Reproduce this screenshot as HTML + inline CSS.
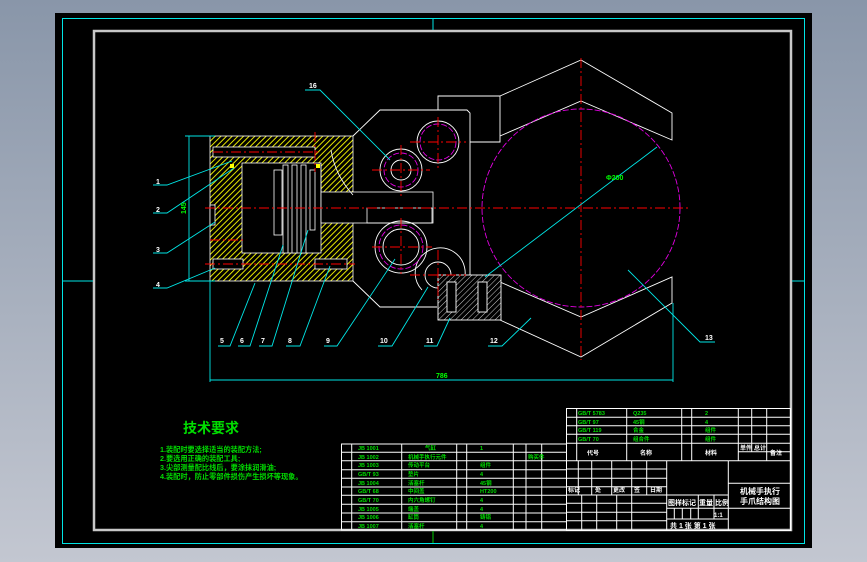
<!DOCTYPE html>
<html><head><meta charset="utf-8"><style>
html,body{margin:0;padding:0;width:867px;height:562px;overflow:hidden;background:linear-gradient(#8996a9,#c3c7d1);}
svg{position:absolute;left:0;top:0}
text{font-family:"Liberation Sans","Noto Sans CJK SC",sans-serif;font-weight:bold}
</style></head><body>
<svg width="867" height="562" viewBox="0 0 867 562" xmlns="http://www.w3.org/2000/svg">
<defs>
<pattern id="hy" width="4" height="4" patternUnits="userSpaceOnUse" patternTransform="rotate(45)">
<rect width="4" height="4" fill="#000"/><line x1="0" y1="0" x2="0" y2="4" stroke="#e6e600" stroke-width="2"/></pattern>
<pattern id="hw" width="4" height="4" patternUnits="userSpaceOnUse" patternTransform="rotate(45)">
<rect width="4" height="4" fill="#000"/><line x1="0" y1="0" x2="0" y2="4" stroke="#fff" stroke-width="0.8"/></pattern>
</defs>
<rect x="55" y="13" width="757" height="535" fill="#000"/>
<rect x="62.5" y="18.5" width="742" height="525" fill="none" stroke="#00e5e5" stroke-width="1"/>
<rect x="94" y="31" width="697" height="499" fill="none" stroke="#c8c8c8" stroke-width="2.5"/>
<g stroke="#00e5e5" stroke-width="1">
<line x1="433" y1="18" x2="433" y2="30"/><line x1="62" y1="281" x2="93" y2="281"/><line x1="792" y1="281" x2="804" y2="281"/></g>
<line x1="433" y1="531" x2="433" y2="543" stroke="#0c0" stroke-width="1"/>

<!-- cylinder -->
<g stroke="#fff" stroke-width="0.8">
<rect x="210" y="136" width="143" height="145" fill="url(#hy)"/>
<rect x="242" y="163" width="79" height="90" fill="#000"/>
<rect x="321" y="192" width="112" height="31" fill="#000"/>
<path d="M321 163 V192 M331 150 Q335 175 353 195" fill="none"/>
<rect x="213" y="147" width="102" height="10" fill="#000"/>
<rect x="213" y="259" width="30" height="10" fill="#000"/>
<rect x="315" y="259" width="32" height="10" fill="#000"/>
<rect x="210" y="205" width="5" height="20" fill="#000"/>
<rect x="274" y="170" width="8" height="65" fill="#000"/>
<rect x="283" y="165" width="5" height="88" fill="#000"/>
<rect x="292" y="165" width="5" height="88" fill="#000"/>
<rect x="301" y="165" width="5" height="88" fill="#000"/>
<rect x="310" y="170" width="5" height="60" fill="#000"/>
<rect x="367" y="208" width="65" height="15" fill="none"/>
</g>
<rect x="230" y="164" width="4" height="4" fill="#ff0"/><rect x="316" y="164" width="4" height="4" fill="#ff0"/>

<!-- plate -->
<g stroke="#fff" stroke-width="0.9" fill="none">
<path d="M353 136 L380 110 H467 L470 113 V275"/>
<path d="M353 281 L380 307 H437"/>
<path d="M470 142 H500 V96 H438 V110"/>
<path d="M500 96 L581 60 L672 113 V140 L581 101 L500 136"/>
<path d="M500 282 L581 317 L672 277 V303 L581 357 L500 320"/>
<circle cx="401" cy="170" r="21"/><circle cx="401" cy="170" r="10"/>
<circle cx="438" cy="142" r="21"/>
<circle cx="401" cy="247" r="26"/><circle cx="401" cy="247" r="18"/>
<path d="M422 290 A25 25 0 1 1 462 285"/><circle cx="438" cy="275" r="13"/>
<rect x="438" y="275" width="63" height="45" fill="url(#hw)"/>
<rect x="447" y="282" width="9" height="30" fill="#000"/><rect x="478" y="282" width="9" height="30" fill="#000"/>
</g>
<g stroke="#e000e0" stroke-width="0.9" fill="none" stroke-dasharray="6,2">
<circle cx="581" cy="208" r="99"/><circle cx="401" cy="170" r="17"/><circle cx="438" cy="142" r="18"/><circle cx="401" cy="247" r="22"/></g>

<!-- center lines -->
<g stroke="#f00" stroke-width="0.9" stroke-dasharray="10,3,2,3">
<line x1="205" y1="208" x2="690" y2="208"/><line x1="581" y1="58" x2="581" y2="360"/>
<line x1="213" y1="152" x2="318" y2="152"/><line x1="205" y1="264" x2="355" y2="264"/><line x1="210" y1="240" x2="245" y2="240"/>
<line x1="372" y1="170" x2="430" y2="170"/><line x1="401" y1="145" x2="401" y2="198"/>
<line x1="410" y1="142" x2="466" y2="142"/><line x1="438" y1="117" x2="438" y2="168"/>
<line x1="372" y1="247" x2="432" y2="247"/><line x1="401" y1="218" x2="401" y2="274"/>
<line x1="410" y1="275" x2="466" y2="275"/><line x1="438" y1="250" x2="438" y2="300"/>
<line x1="315" y1="132" x2="315" y2="172"/></g>

<!-- dims and leaders -->
<g stroke="#00e5e5" stroke-width="0.9" fill="none">
<path d="M210 281 V382 M673 303 V382 M210 380 H673 M185 136 H215 M185 281 H215 M189 136 V281"/>
<path d="M153 185 H167 L232 161 M153 213 H167 L234 168 M153 253 H167 L215 222 M153 288 H167 L215 268"/>
<path d="M218 346 H230 L255 283 M238 346 H250 L283 245 M259 346 H272 L308 230 M286 346 H300 L330 266 M324 346 H337 L395 259 M378 346 H392 L428 287 M424 346 H437 L450 318 M488 346 H502 L531 318"/>
<path d="M305 90 H320 L390 160 M485 277 L657 147 M628 270 L700 342 H715"/></g>
<g fill="#fff" font-size="7">
<text x="156" y="184">1</text><text x="156" y="212">2</text><text x="156" y="252">3</text><text x="156" y="287">4</text>
<text x="220" y="343">5</text><text x="240" y="343">6</text><text x="261" y="343">7</text><text x="288" y="343">8</text><text x="326" y="343">9</text><text x="380" y="343">10</text><text x="426" y="343">11</text><text x="490" y="343">12</text><text x="705" y="340">13</text><text x="309" y="88">16</text></g>
<g fill="#0f0" font-size="7"><text x="436" y="378">786</text><text x="182" y="210" transform="rotate(-90 186 210)">145</text><text x="606" y="180">Φ200</text></g>

<!-- tech requirements -->
<g fill="#0d0">
<text x="183" y="433" font-size="14">技术要求</text>
<text x="160" y="452" font-size="7.2">1.装配时要选择适当的装配方法;</text>
<text x="160" y="461" font-size="7.2">2.要选用正确的装配工具;</text>
<text x="160" y="470" font-size="7.2">3.尖部测量配比线后，要涂抹润滑油;</text>
<text x="160" y="479" font-size="7.2">4.装配时，防止零部件损伤产生损坏等现象。</text></g>

<!-- tables -->
<g stroke="#fff" stroke-width="1" fill="none">
<rect x="566.5" y="408.5" width="224" height="122"/>
<path d="M566 417.3 H790 M566 425.7 H790 M566 434.3 H790 M566 443.3 H790 M738 451.7 H790 M566 460.7 H790"/>
<path d="M576.7 408 V460.7 M626.7 408 V460.7 M681.7 408 V460.7 M691.7 408 V460.7 M738.3 408 V460.7 M751.7 408 V451.7 M766.7 408 V460.7"/>
<rect x="341.5" y="444" width="225" height="86"/>
<path d="M341 452.3 H566 M341 460.7 H566 M341 469.7 H566 M341 478.3 H566 M341 487 H566 M341 495.3 H566 M341 504.3 H566 M341 513 H566 M341 521.7 H566"/>
<path d="M351.7 444 V530 M401.7 444 V530 M456.7 444 V530 M466.7 444 V530 M513.3 444 V530 M526 444 V530 M541.7 444 V530"/>
<path d="M666.7 460.7 V530 M728.3 460.7 V530"/>
<path d="M566 469 H666.7 M566 478.3 H666.7 M566 486.7 H666.7 M566 495 H666.7 M566 503.3 H666.7 M566 512.3 H666.7 M566 520.7 H666.7"/>
<path d="M578.3 460.7 V495 M591.7 460.7 V495 M611.7 460.7 V495 M631.7 460.7 V530 M646.7 460.7 V495 M581.7 495 V530 M596.7 495 V530 M616.7 495 V530"/>
<path d="M666.7 495 H728 M666.7 508.3 H790 M666.7 519 H728 M728 483.3 H790"/>
<path d="M674.3 508.3 V519 M682.3 508.3 V519 M690.7 508.3 V519 M698.3 495 V519 M714 495 V519"/></g>
<g fill="#0d0" font-size="5.5">
<text x="578" y="415">GB/T 5783</text><text x="633" y="415">Q235</text><text x="705" y="415">2</text>
<text x="578" y="424">GB/T 97</text><text x="633" y="424">45钢</text><text x="705" y="424">4</text>
<text x="578" y="432">GB/T 119</text><text x="633" y="432">合金</text><text x="705" y="432">组件</text>
<text x="578" y="441">GB/T 70</text><text x="633" y="441">组合件</text><text x="705" y="441">组件</text>
<text x="358" y="450">JB 1001</text><text x="425" y="450">气缸</text><text x="480" y="450">1</text>
<text x="358" y="459">JB 1002</text><text x="408" y="459">机械手执行元件</text><text x="528" y="459">购买件</text>
<text x="358" y="467">JB 1003</text><text x="408" y="467">传动平台</text><text x="480" y="467">组件</text>
<text x="358" y="476">GB/T 93</text><text x="408" y="476">垫片</text><text x="480" y="476">4</text>
<text x="358" y="485">JB 1004</text><text x="408" y="485">活塞杆</text><text x="480" y="485">45钢</text>
<text x="358" y="493">GB/T 68</text><text x="408" y="493">中间盖</text><text x="480" y="493">HT200</text>
<text x="358" y="502">GB/T 70</text><text x="408" y="502">内六角螺钉</text><text x="480" y="502">4</text>
<text x="358" y="511">JB 1005</text><text x="408" y="511">端盖</text><text x="480" y="511">4</text>
<text x="358" y="519">JB 1006</text><text x="408" y="519">缸筒</text><text x="480" y="519">铸铝</text>
<text x="358" y="528">JB 1007</text><text x="408" y="528">活塞杆</text><text x="480" y="528">4</text></g>
<g fill="#fff" font-size="6">
<text x="587" y="455">代号</text><text x="640" y="455">名称</text><text x="705" y="455">材料</text><text x="740" y="450">单件</text><text x="754" y="450">总计</text><text x="770" y="455">备注</text>
<text x="568" y="492">标记</text><text x="595" y="492">处</text><text x="613" y="492">更改</text><text x="634" y="492">签</text><text x="650" y="492">日期</text>
<text x="668" y="505" font-size="7">图样标记</text><text x="699" y="505" font-size="7">重量</text><text x="715" y="505" font-size="7">比例</text>
<text x="714" y="517">1:1</text><text x="670" y="528" font-size="7">共 1 张 第 1 张</text>
<text x="740" y="494" font-size="8">机械手执行</text><text x="740" y="504" font-size="8">手爪结构图</text></g>
</svg>
</body></html>
